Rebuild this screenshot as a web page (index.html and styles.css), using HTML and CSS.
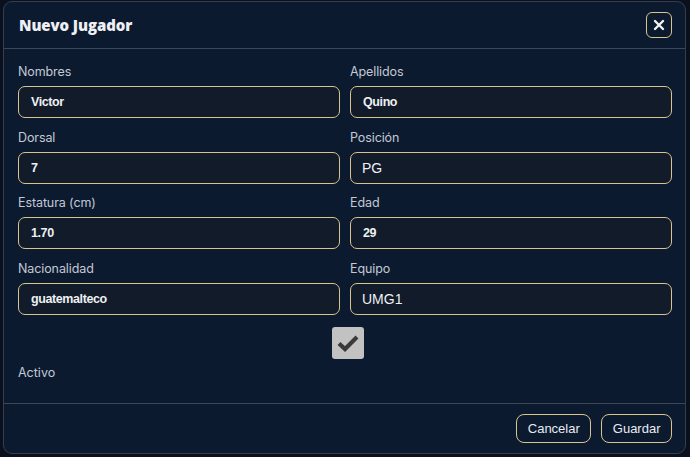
FILE: index.html
```html
<!DOCTYPE html>
<html lang="es">
<head>
<meta charset="utf-8">
<title>Nuevo Jugador</title>
<link rel="stylesheet" href="styles.css">
</head>
<body>
<div class="modal">
  <div class="modal-header">
    <h2 class="title">Nuevo Jugador</h2>
    <button class="close" type="button" aria-label="Cerrar">
      <svg width="12" height="12" viewBox="0 0 12 12"><path d="M2 2 L10 10 M10 2 L2 10" stroke="#f2f2f2" stroke-width="2.4" stroke-linecap="round"/></svg>
    </button>
  </div>
  <div class="modal-body">
    <div class="grid">
      <div class="field"><label>Nombres</label><div class="input">Victor</div></div>
      <div class="field"><label>Apellidos</label><div class="input">Quino</div></div>
      <div class="field"><label>Dorsal</label><div class="input">7</div></div>
      <div class="field"><label>Posición</label><div class="input select">PG</div></div>
      <div class="field"><label>Estatura (cm)</label><div class="input">1.70</div></div>
      <div class="field"><label>Edad</label><div class="input">29</div></div>
      <div class="field"><label>Nacionalidad</label><div class="input">guatemalteco</div></div>
      <div class="field"><label>Equipo</label><div class="input select">UMG1</div></div>
    </div>
    <div class="check-row">
      <span class="check">
        <svg width="24" height="20" viewBox="0 0 24 20"><path d="M3 10.5 L9 16 L21 4" fill="none" stroke="#3a3a3a" stroke-width="4.2" stroke-linejoin="miter"/></svg>
      </span>
    </div>
    <div class="activo">Activo</div>
  </div>
  <div class="modal-footer">
    <button class="btn" type="button">Cancelar</button>
    <button class="btn" type="button">Guardar</button>
  </div>
</div>
</body>
</html>
```
FILE: styles.css
```css
html, body {
  margin: 0;
  height: 100%;
}
body {
  background: #0a111d;
  padding: 1px 4px 0 3px;
  box-sizing: border-box;
  font-family: "Inter", "Noto Sans", sans-serif;
}
.modal {
  width: 683px;
  height: 453px;
  box-sizing: border-box;
  background: #0c1a30;
  border: 1px solid #343e4e;
  border-radius: 9px;
  display: flex;
  flex-direction: column;
}
.modal-header {
  height: 46px;
  border-bottom: 1px solid #3d4654;
  display: flex;
  align-items: center;
  justify-content: space-between;
  padding: 0 13px 0 15px;
  box-sizing: content-box;
}
.title {
  margin: 0;
  color: #eef0f4;
  font-family: "Open Sans", sans-serif;
  font-weight: 800;
  font-size: 15px;
  letter-spacing: -0.1px;
}
.close {
  width: 26px;
  height: 26px;
  border: 1px solid #d8c48e;
  border-radius: 6px;
  background: transparent;
  padding: 0;
  display: flex;
  align-items: center;
  justify-content: center;
}
.modal-body {
  flex: 1;
  padding: 15px 14px 0 14px;
}
.grid {
  display: grid;
  grid-template-columns: 322px 322px;
  column-gap: 10px;
  row-gap: 11.7px;
}
.field label {
  display: block;
  color: #c3c9d3;
  font-size: 12.5px;
  line-height: 16px;
  margin-bottom: 6px;
  letter-spacing: -0.1px;
}
.input {
  height: 32px;
  box-sizing: border-box;
  background: #111b2a;
  border: 1px solid #d8c48e;
  border-radius: 7px;
  padding: 0 12px;
  display: flex;
  align-items: center;
  color: #eef0f3;
  font-family: "Liberation Sans", Arial, sans-serif;
  font-size: 12.5px;
  font-weight: bold;
  letter-spacing: -0.4px;
}
.input.select {
  font-weight: normal;
  font-size: 14px;
  letter-spacing: 0;
  padding-left: 11px;
}
.check-row {
  display: flex;
  justify-content: center;
  padding-left: 7px;
  margin-top: 12px;
}
.check {
  width: 32px;
  height: 32px;
  box-sizing: border-box;
  background: #c2c2c2;
  border-radius: 3px;
  display: flex;
  align-items: center;
  justify-content: center;
}
.activo {
  margin-top: 6px;
  color: #c3c9d3;
  font-size: 12.5px;
  line-height: 16px;
}
.modal-footer {
  border-top: 1px solid #3d4654;
  height: 49px;
  display: flex;
  justify-content: flex-end;
  align-items: center;
  gap: 10px;
  padding: 0 13px 0 0;
}
.btn {
  height: 29px;
  padding: 0 10.5px;
  background: transparent;
  border: 1px solid #d8c48e;
  border-radius: 8px;
  color: #e8ebf0;
  font-family: "Liberation Sans", Arial, sans-serif;
  font-size: 13px;
}
```
